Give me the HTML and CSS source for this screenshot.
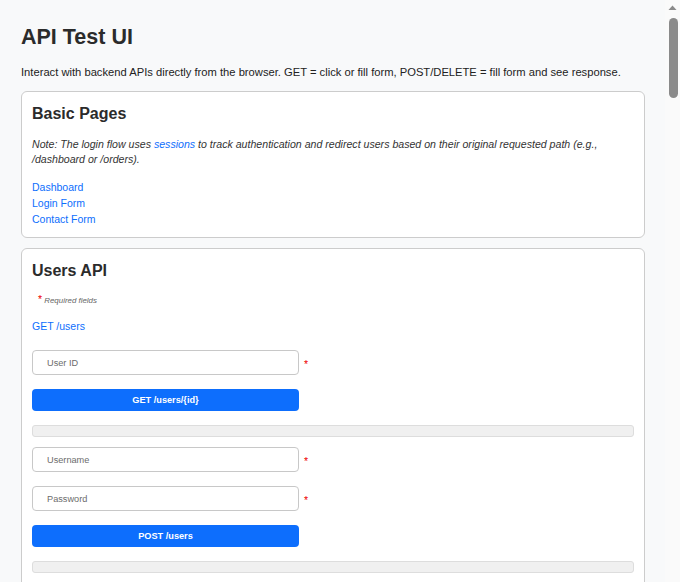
FILE: index.html
```html
<!DOCTYPE html>
<html lang="en">
<head>
<meta charset="utf-8">
<title>API Test UI</title>
<link rel="stylesheet" href="styles.css">
</head>
<body>
<div class="scrollbar" aria-hidden="true">
  <svg class="scroll-arrow scroll-arrow-up" width="15" height="15" viewBox="0 0 15 15"><path d="M3.5 10 L7.5 5.5 L11.5 10 Z" fill="#8a8a8a"/></svg>
  <div class="scroll-thumb"></div>
</div>

<h1 class="title">API Test UI</h1>
<p class="intro">Interact with backend APIs directly from the browser. GET = click or fill form, POST/DELETE = fill form and see response.</p>

<section class="card">
  <h2 class="card-title">Basic Pages</h2>
  <p class="note">Note: The login flow uses <a href="#" class="link">sessions</a> to track authentication and redirect users based on their original requested path (e.g., /dashboard or /orders).</p>
  <ul class="link-list">
    <li><a href="#" class="link">Dashboard</a></li>
    <li><a href="#" class="link">Login Form</a></li>
    <li><a href="#" class="link">Contact Form</a></li>
  </ul>
</section>

<section class="card">
  <h2 class="card-title">Users API</h2>
  <p class="required-note"><span class="req">*</span> Required fields</p>
  <p class="endpoint"><a href="#" class="link">GET /users</a></p>

  <div class="field"><input class="input" type="text" placeholder="User ID"><span class="req">*</span></div>
  <button class="btn">GET /users/{id}</button>
  <div class="response"></div>

  <div class="field"><input class="input" type="text" placeholder="Username"><span class="req">*</span></div>
  <div class="field"><input class="input" type="password" placeholder="Password"><span class="req">*</span></div>
  <button class="btn">POST /users</button>
  <div class="response"></div>

  <div class="field"><input class="input" type="text" placeholder="User ID"><span class="req">*</span></div>
  <button class="btn">DELETE /users/{id}</button>
  <div class="response"></div>
</section>

<section class="card">
  <h2 class="card-title">Orders API</h2>
  <p class="required-note"><span class="req">*</span> Required fields</p>
  <p class="endpoint"><a href="#" class="link">GET /orders</a></p>
  <div class="field"><input class="input" type="text" placeholder="Order ID"><span class="req">*</span></div>
  <button class="btn">GET /orders/{id}</button>
  <div class="response"></div>
  <div class="field"><input class="input" type="text" placeholder="User ID"><span class="req">*</span></div>
  <div class="field"><input class="input" type="text" placeholder="Product ID"><span class="req">*</span></div>
  <div class="field"><input class="input" type="text" placeholder="Quantity"><span class="req">*</span></div>
  <button class="btn">POST /orders</button>
  <div class="response"></div>
  <div class="field"><input class="input" type="text" placeholder="Order ID"><span class="req">*</span></div>
  <button class="btn">DELETE /orders/{id}</button>
  <div class="response"></div>
</section>

<section class="card">
  <h2 class="card-title">Products API</h2>
  <p class="required-note"><span class="req">*</span> Required fields</p>
  <p class="endpoint"><a href="#" class="link">GET /products</a></p>
  <div class="field"><input class="input" type="text" placeholder="Product ID"><span class="req">*</span></div>
  <button class="btn">GET /products/{id}</button>
  <div class="response"></div>
  <div class="field"><input class="input" type="text" placeholder="Name"><span class="req">*</span></div>
  <div class="field"><input class="input" type="text" placeholder="Price"><span class="req">*</span></div>
  <div class="field"><input class="input" type="text" placeholder="Category"><span class="req">*</span></div>
  <button class="btn">POST /products</button>
  <div class="response"></div>
  <div class="field"><input class="input" type="text" placeholder="Product ID"><span class="req">*</span></div>
  <button class="btn">DELETE /products/{id}</button>
  <div class="response"></div>
</section>

<section class="card">
  <h2 class="card-title">Auth API</h2>
  <p class="required-note"><span class="req">*</span> Required fields</p>
  <div class="field"><input class="input" type="text" placeholder="Username"><span class="req">*</span></div>
  <div class="field"><input class="input" type="password" placeholder="Password"><span class="req">*</span></div>
  <button class="btn">POST /auth/login</button>
  <div class="response"></div>
  <button class="btn">POST /auth/logout</button>
  <div class="response"></div>
  <p class="endpoint"><a href="#" class="link">GET /auth/session</a></p>
</section>

<section class="card">
  <h2 class="card-title">Contact API</h2>
  <p class="required-note"><span class="req">*</span> Required fields</p>
  <div class="field"><input class="input" type="text" placeholder="Name"><span class="req">*</span></div>
  <div class="field"><input class="input" type="text" placeholder="Email"><span class="req">*</span></div>
  <div class="field"><input class="input" type="text" placeholder="Subject"><span class="req">*</span></div>
  <div class="field"><input class="input" type="text" placeholder="Message"><span class="req">*</span></div>
  <button class="btn">POST /contact</button>
  <div class="response"></div>
</section>

<section class="card">
  <h2 class="card-title">Search API</h2>
  <p class="required-note"><span class="req">*</span> Required fields</p>
  <div class="field"><input class="input" type="text" placeholder="Query"><span class="req">*</span></div>
  <div class="field"><input class="input" type="text" placeholder="Limit"><span class="req">*</span></div>
  <button class="btn">GET /search</button>
  <div class="response"></div>
  <div class="field"><input class="input" type="text" placeholder="Tag"><span class="req">*</span></div>
  <button class="btn">GET /search/tags</button>
  <div class="response"></div>
</section>

<section class="card">
  <h2 class="card-title">Health &amp; Misc</h2>
  <ul class="link-list">
    <li><a href="#" class="link">GET /health</a></li>
    <li><a href="#" class="link">GET /version</a></li>
    <li><a href="#" class="link">GET /status</a></li>
  </ul>
  <div class="field"><input class="input" type="text" placeholder="Delay (ms)"><span class="req">*</span></div>
  <button class="btn">GET /slow</button>
  <div class="response"></div>
  <div class="field"><input class="input" type="text" placeholder="Status code"><span class="req">*</span></div>
  <button class="btn">GET /error/{code}</button>
  <div class="response"></div>
</section>
</body>
</html>
```

FILE: styles.css
```css
html {
  background: #f8f9fa;
}
body {
  margin: 0;
  padding: 20px 35px 30px 21px;
  background: #f8f9fa;
  color: #333;
  font-family: "Liberation Sans", Arial, sans-serif;
  font-size: 10.6px;
}
.scrollbar {
  position: fixed;
  top: 0;
  right: 0;
  bottom: 0;
  width: 15px;
  background: #fafafa;
}
.scroll-arrow {
  display: block;
}
.scroll-thumb {
  position: absolute;
  top: 18px;
  left: 4px;
  width: 9px;
  height: 80px;
  border-radius: 5px;
  background: #8a8a8a;
}
.title {
  margin: 5px 0 0;
  font-size: 21.5px;
  line-height: 24px;
  font-weight: bold;
  color: #2b2b2b;
}
.intro {
  margin: 17px 0 13px;
  font-size: 11.2px;
  line-height: 12px;
  color: #222;
}
.card {
  background: #fff;
  border: 1px solid #ccc;
  border-radius: 6px;
  padding: 10px;
  margin-bottom: 10px;
}
.card-title {
  margin: 3px 0 14px;
  font-size: 16px;
  line-height: 18px;
  font-weight: bold;
  color: #2b2b2b;
}
.note {
  margin: 0 0 12px;
  font-style: italic;
  line-height: 15px;
  color: #333;
}
.link {
  color: #0d6efd;
  text-decoration: none;
}
.link-list {
  list-style: none;
  margin: 0;
  padding: 0;
  font-size: 10.5px;
  line-height: 16px;
}
.required-note {
  margin: 2px 0 10px 6px;
  font-size: 7.9px;
  font-style: italic;
  line-height: 14px;
  color: #666;
}
.required-note .req {
  font-style: normal;
  font-size: 10.5px;
}
.req {
  color: #e00;
  font-size: 10.5px;
  line-height: 1;
}
.endpoint {
  margin: 0 0 16px;
  font-size: 10.5px;
  line-height: 16px;
}
.field {
  display: flex;
  align-items: center;
  gap: 5px;
  margin-bottom: 14px;
}
.field .req {
  padding-top: 4px;
}
.input {
  box-sizing: border-box;
  width: 267px;
  height: 25px;
  margin: 0;
  padding: 0 14px;
  border: 1px solid #c8c8c8;
  border-radius: 4px;
  background: #fff;
  font-family: "Liberation Sans", Arial, sans-serif;
  font-size: 9.2px;
  color: #333;
}
.input::placeholder {
  color: #6c6c6c;
}
.btn {
  display: block;
  box-sizing: border-box;
  width: 267px;
  height: 22px;
  margin: 0 0 14px;
  padding: 0;
  border: none;
  border-radius: 4px;
  background: #0d6efd;
  color: #fff;
  font-family: "Liberation Sans", Arial, sans-serif;
  font-size: 9.2px;
  font-weight: bold;
  cursor: pointer;
}
.response {
  box-sizing: border-box;
  height: 12px;
  margin-bottom: 10px;
  background: #f0f0f0;
  border: 1px solid #ddd;
  border-radius: 3px;
}
```
